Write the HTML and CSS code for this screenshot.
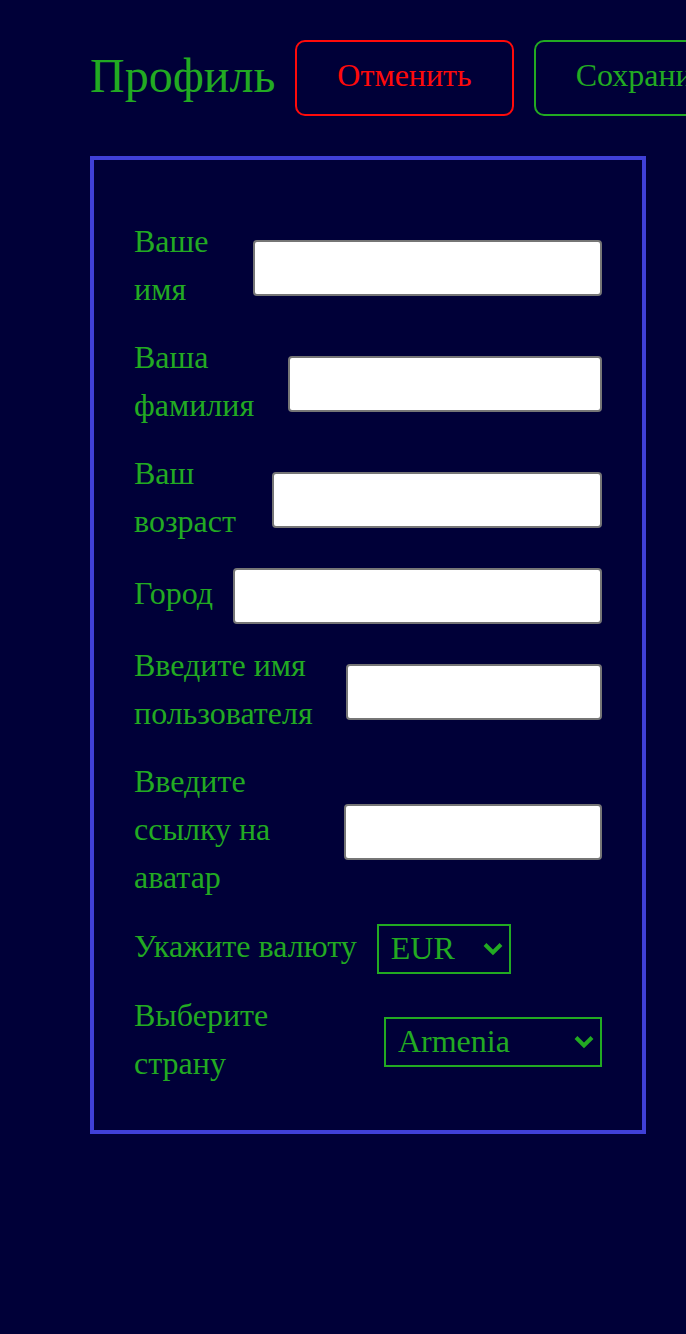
FILE: index.html
```html
<!DOCTYPE html>
<html lang="ru">
<head>
<meta charset="utf-8">
<meta name="viewport" content="width=device-width, initial-scale=1">
<title>Профиль</title>
<link rel="stylesheet" href="styles.css">
</head>
<body class="page">
<main class="profile">
  <header class="profile-header">
    <h1 class="title">Профиль</h1>
    <button class="button button-cancel" type="button">Отменить</button>
    <button class="button button-save" type="submit" form="profile-form">Сохранить</button>
  </header>
  <form class="form" id="profile-form">
    <div class="row"><label class="label" for="name">Ваше имя</label><input class="input" id="name" type="text"></div>
    <div class="row"><label class="label" for="surname">Ваша фамилия</label><input class="input" id="surname" type="text"></div>
    <div class="row"><label class="label" for="age">Ваш возраст</label><input class="input" id="age" type="text"></div>
    <div class="row"><label class="label" for="city">Город</label><input class="input" id="city" type="text"></div>
    <div class="row"><label class="label" for="username">Введите имя пользователя</label><input class="input" id="username" type="text"></div>
    <div class="row"><label class="label" for="avatar">Введите ссылку на аватар</label><input class="input" id="avatar" type="text"></div>
    <div class="row">
      <label class="label" for="currency">Укажите валюту</label>
      <span class="select-box select-currency">
        <select class="select" id="currency"><option>EUR</option></select>
        <svg class="chevron" viewBox="0 0 20 14" aria-hidden="true"><path d="M2 2.5l8 8 8-8"/></svg>
      </span>
    </div>
    <div class="row">
      <label class="label" for="country">Выберите страну</label>
      <span class="select-box select-country">
        <select class="select" id="country"><option>Armenia</option></select>
        <svg class="chevron" viewBox="0 0 20 14" aria-hidden="true"><path d="M2 2.5l8 8 8-8"/></svg>
      </span>
    </div>
  </form>
</main>
</body>
</html>
```
FILE: styles.css
```css
*, *::before, *::after {
  box-sizing: border-box;
}

.page {
  margin: 0;
  min-height: 100vh;
  overflow-x: hidden;
  background: #000038;
  color: #22aa22;
  font: 32px/48px "Liberation Serif", "Times New Roman", serif;
}

.profile {
  padding: 40px 40px 40px 90px;
}

.profile-header {
  display: flex;
  align-items: center;
  gap: 20px;
  margin-bottom: 40px;
}

.title {
  margin: 0;
  padding-bottom: 4px;
  font-size: 48px;
  font-weight: 400;
  line-height: 72px;
}

.button {
  flex: none;
  padding: 15px 40px 21px;
  border: 2px solid currentColor;
  border-radius: 10px;
  background: transparent;
  font: inherit;
  line-height: 36px;
}

.button-cancel {
  color: #ff0a0a;
}

.button-save {
  color: #22aa22;
}

.form {
  display: flex;
  flex-direction: column;
  gap: 20px;
  padding: 60px 40px 40px;
  border: 4px solid #4040d8;
}

.row {
  display: flex;
  align-items: center;
  gap: 20px;
}

.label {
  margin-top: -3px;
  padding-bottom: 3px;
}

.input {
  width: 100%;
  min-width: 0;
  height: 56px;
  padding: 2px 4px;
  border: 2px solid #767676;
  border-radius: 4px;
  background: #ffffff;
  font: inherit;
}

.select-box {
  position: relative;
  display: flex;
}

.select-currency {
  width: 134px;
}

.select-country {
  width: 222px;
}

.select {
  appearance: none;
  width: 100%;
  height: 50px;
  padding: 4px 40px 6px 12px;
  border: 2px solid #22aa22;
  border-radius: 0;
  background: transparent;
  color: inherit;
  font: inherit;
  line-height: 36px;
}

.chevron {
  position: absolute;
  top: 18px;
  right: 8px;
  width: 20px;
  height: 14px;
  fill: none;
  stroke: currentColor;
  stroke-width: 4px;
  pointer-events: none;
}
```
